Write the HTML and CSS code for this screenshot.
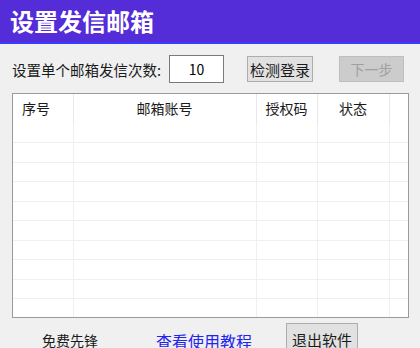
FILE: index.html
```html
<!DOCTYPE html>
<html lang="zh-CN">
<head>
  <meta charset="UTF-8" />
  <meta name="viewport" content="width=device-width, initial-scale=1.0"/>
  <title>设置发信邮箱</title>
  <link rel="stylesheet" href="styles.css">
</head>
<body>

  <div class="window">
    <div class="title-bar">设置发信邮箱</div>

    <div class="toolbar">
      <span class="label">设置单个邮箱发信次数:</span>
      <input type="text" class="count" value="10" />
      <button class="btn check">检测登录</button>
      <button class="btn next" disabled>下一步</button>
    </div>

    <div class="list">
      <table>
        <thead>
          <tr>
            <th class="col-no">序号</th>
            <th class="col-mail">邮箱账号</th>
            <th class="col-code">授权码</th>
            <th class="col-state">状态</th>
            <th class="col-end"></th>
          </tr>
        </thead>
        <tbody>
          <tr><td></td><td></td><td></td><td></td><td></td></tr>
          <tr><td></td><td></td><td></td><td></td><td></td></tr>
          <tr><td></td><td></td><td></td><td></td><td></td></tr>
          <tr><td></td><td></td><td></td><td></td><td></td></tr>
          <tr><td></td><td></td><td></td><td></td><td></td></tr>
          <tr><td></td><td></td><td></td><td></td><td></td></tr>
          <tr><td></td><td></td><td></td><td></td><td></td></tr>
          <tr><td></td><td></td><td></td><td></td><td></td></tr>
          <tr><td></td><td></td><td></td><td></td><td></td></tr>
          <tr><td></td><td></td><td></td><td></td><td></td></tr>
        </tbody>
      </table>
    </div>

    <div class="footer">
      <span class="brand">免费先锋</span>
      <a class="help" href="#">查看使用教程</a>
      <button class="btn quit">退出软件</button>
    </div>
  </div>

</body>
</html>
```

FILE: styles.css
```css
body {
  margin: 0;
  font-family: "Noto Sans CJK SC", "Liberation Sans", sans-serif;
  background-color: #f0f0f0;
  color: #1a1a1a;
  overflow: hidden;
}
.window {
  width: 420px;
  height: 348px;
  overflow: hidden;
}
.title-bar {
  height: 42px;
  line-height: 42px;
  padding-left: 10px;
  background-color: #542cd8;
  border-bottom: 2px solid #3a3cff;
  color: #fff;
  font-size: 24px;
  font-weight: bold;
}
.toolbar {
  display: flex;
  align-items: center;
  height: 28px;
  margin-top: 11px;
  padding-left: 12px;
  font-size: 14.5px;
}
.label {
  width: 157px;
  white-space: nowrap;
}
.count {
  box-sizing: border-box;
  width: 55px;
  height: 28px;
  border: 1px solid #7a7a7a;
  background: #fff;
  font-family: inherit;
  font-size: 14px;
  text-align: center;
  padding: 0;
}
.btn {
  box-sizing: border-box;
  height: 26px;
  padding: 0;
  border: 1px solid #adadad;
  background-color: #e1e1e1;
  font-family: inherit;
  font-size: 15px;
  color: #1a1a1a;
}
.check {
  width: 66px;
  margin-left: 23px;
}
.next {
  width: 65px;
  margin-left: 26px;
  background-color: #cccccc;
  border-color: #bfbfbf;
  color: #a0a0a0;
  font-size: 14px;
}
.list {
  box-sizing: border-box;
  width: 397px;
  height: 225px;
  margin: 10px 0 0 12px;
  border: 1px solid #9a9a9a;
  background: #fff;
  overflow: hidden;
}
table {
  border-collapse: collapse;
  table-layout: fixed;
  width: 395px;
}
th {
  height: 29px;
  padding: 0;
  font-size: 14px;
  font-weight: normal;
  vertical-align: top;
  padding-top: 4px;
  box-sizing: border-box;
  border-right: 1px solid #e8e8e8;
}
th:last-child {
  border-right: none;
}
.col-no {
  width: 60px;
  text-align: left;
  padding-left: 9px;
}
.col-mail {
  width: 183px;
}
.col-code {
  width: 61px;
}
.col-state {
  width: 72px;
}
.col-end {
  width: 19px;
}
td {
  height: 19.5px;
  padding: 0;
  box-sizing: border-box;
  border-right: 1px solid #efefef;
  border-bottom: 1px solid #efefef;
}
td:last-child {
  border-right: none;
}
.footer {
  display: flex;
  align-items: flex-start;
  margin-top: 5px;
  font-size: 14px;
}
.brand {
  margin: 7px 0 0 42px;
}
.help {
  margin: 6px 0 0 58px;
  font-size: 16px;
  color: #2323ee;
  text-decoration: none;
}
.quit {
  width: 72px;
  height: 32px;
  margin-left: 34px;
}
```
